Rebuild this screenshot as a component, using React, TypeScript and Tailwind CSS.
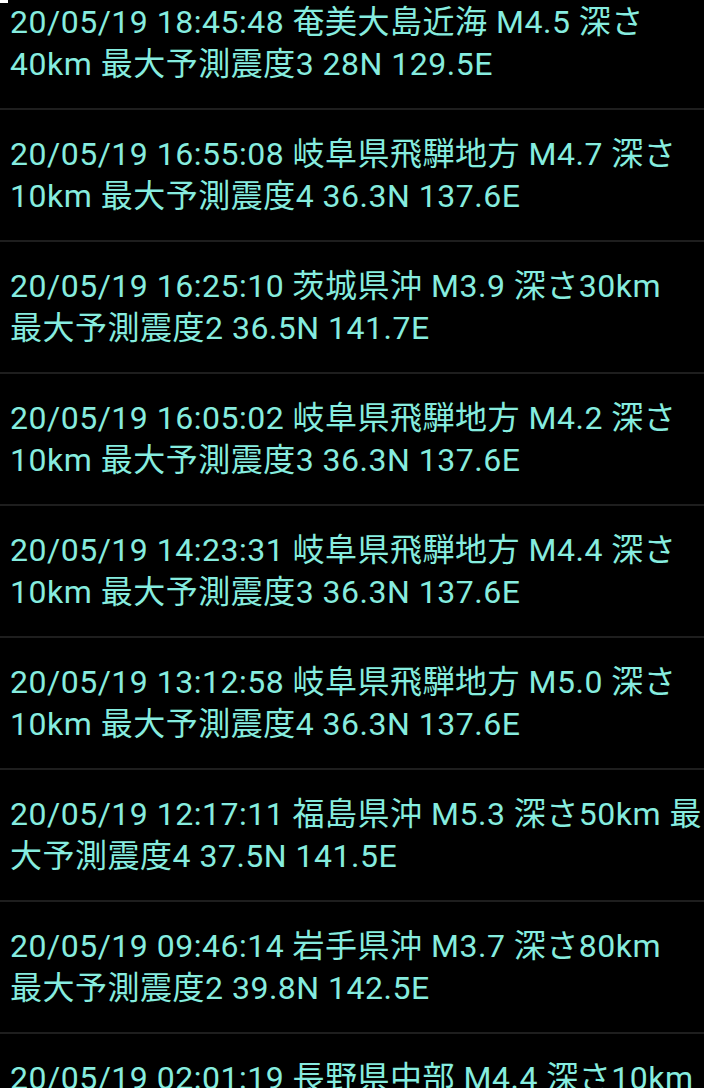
import React from "react";

const rows: [string, string][] = [
  ["20/05/19 18:45:48 奄美大島近海 M4.5 深さ", "40km 最大予測震度3 28N 129.5E"],
  ["20/05/19 16:55:08 岐阜県飛騨地方 M4.7 深さ", "10km 最大予測震度4 36.3N 137.6E"],
  ["20/05/19 16:25:10 茨城県沖 M3.9 深さ30km", "最大予測震度2 36.5N 141.7E"],
  ["20/05/19 16:05:02 岐阜県飛騨地方 M4.2 深さ", "10km 最大予測震度3 36.3N 137.6E"],
  ["20/05/19 14:23:31 岐阜県飛騨地方 M4.4 深さ", "10km 最大予測震度3 36.3N 137.6E"],
  ["20/05/19 13:12:58 岐阜県飛騨地方 M5.0 深さ", "10km 最大予測震度4 36.3N 137.6E"],
  ["20/05/19 12:17:11 福島県沖 M5.3 深さ50km 最", "大予測震度4 37.5N 141.5E"],
  ["20/05/19 09:46:14 岩手県沖 M3.7 深さ80km", "最大予測震度2 39.8N 142.5E"],
  ["20/05/19 02:01:19 長野県中部 M4.4 深さ10km", "最大予測震度3 36.1N 137.6E"],
];

export default function App() {
  return (
    <div className="relative w-[704px] h-[1088px] overflow-hidden bg-black">
      <div className="absolute left-0 top-0 w-[8px] h-[3px] bg-white" />
      <div
        className="-mt-[22px] flex flex-col text-[32px] leading-[42px] tracking-[0.5px] text-[#86ecdf]"
        style={{ fontFamily: 'Roboto, "Noto Sans CJK JP", sans-serif' }}
      >
        {rows.map(([a, b], i) => (
          <div
            key={i}
            className="flex flex-col pl-[10px] pr-[6px] pt-[23px] pb-[23px] border-b-2 border-[#1e1e1e]"
          >
            <span className="whitespace-nowrap">{a}</span>
            <span className="whitespace-nowrap">{b}</span>
          </div>
        ))}
      </div>
    </div>
  );
}
